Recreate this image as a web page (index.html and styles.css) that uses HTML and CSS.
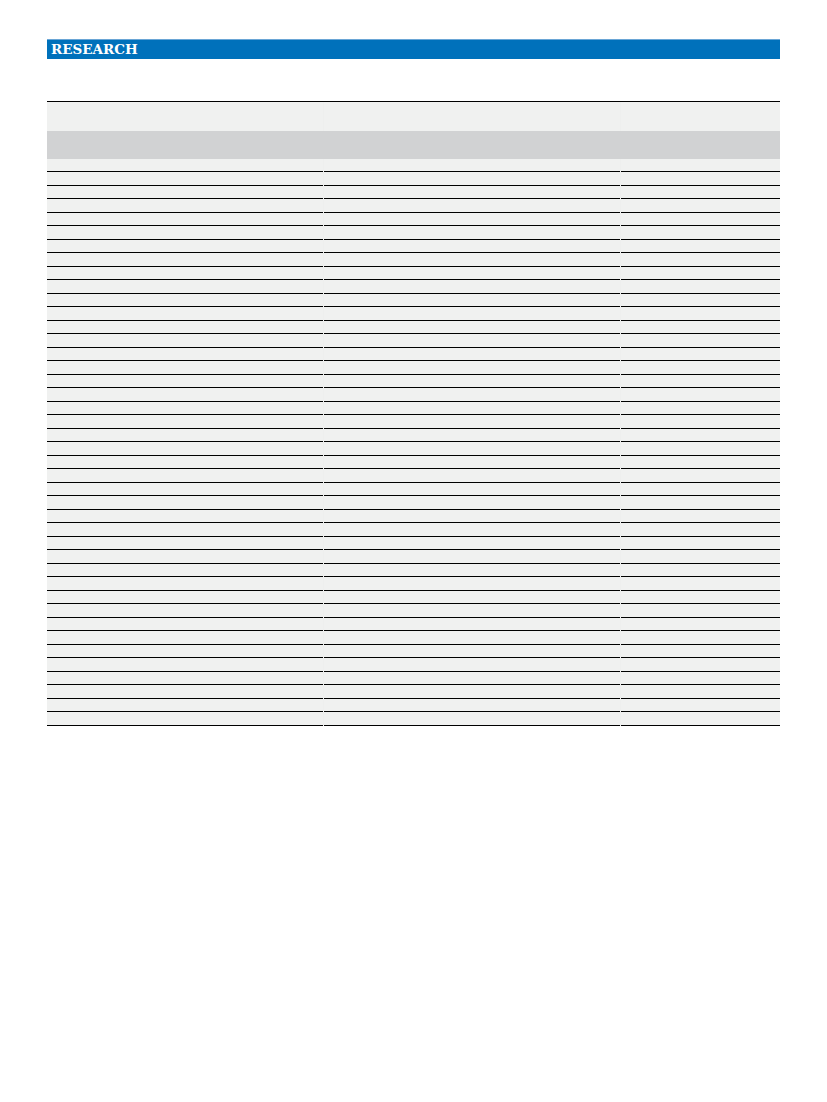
FILE: index.html
```html
<!DOCTYPE html>
<html>
<head>
<meta charset="utf-8">
<link rel="stylesheet" href="styles.css">
</head>
<body>
<div class="page">
  <div class="banner"><span class="banner-title">RESEARCH</span></div>
  <div class="table">
    <div class="row head-a"><div class="cell"></div><div class="cell"></div><div class="cell"></div></div>
    <div class="row head-b"><div class="cell"></div><div class="cell"></div><div class="cell"></div></div>
    <div class="row head-c"><div class="cell"></div><div class="cell"></div><div class="cell"></div></div>
    <div class="row body"><div class="cell"></div><div class="cell"></div><div class="cell"></div></div>
    <div class="row body"><div class="cell"></div><div class="cell"></div><div class="cell"></div></div>
    <div class="row body"><div class="cell"></div><div class="cell"></div><div class="cell"></div></div>
    <div class="row body"><div class="cell"></div><div class="cell"></div><div class="cell"></div></div>
    <div class="row body"><div class="cell"></div><div class="cell"></div><div class="cell"></div></div>
    <div class="row body"><div class="cell"></div><div class="cell"></div><div class="cell"></div></div>
    <div class="row body"><div class="cell"></div><div class="cell"></div><div class="cell"></div></div>
    <div class="row body"><div class="cell"></div><div class="cell"></div><div class="cell"></div></div>
    <div class="row body"><div class="cell"></div><div class="cell"></div><div class="cell"></div></div>
    <div class="row body"><div class="cell"></div><div class="cell"></div><div class="cell"></div></div>
    <div class="row body"><div class="cell"></div><div class="cell"></div><div class="cell"></div></div>
    <div class="row body"><div class="cell"></div><div class="cell"></div><div class="cell"></div></div>
    <div class="row body"><div class="cell"></div><div class="cell"></div><div class="cell"></div></div>
    <div class="row body"><div class="cell"></div><div class="cell"></div><div class="cell"></div></div>
    <div class="row body"><div class="cell"></div><div class="cell"></div><div class="cell"></div></div>
    <div class="row body"><div class="cell"></div><div class="cell"></div><div class="cell"></div></div>
    <div class="row body"><div class="cell"></div><div class="cell"></div><div class="cell"></div></div>
    <div class="row body"><div class="cell"></div><div class="cell"></div><div class="cell"></div></div>
    <div class="row body"><div class="cell"></div><div class="cell"></div><div class="cell"></div></div>
    <div class="row body"><div class="cell"></div><div class="cell"></div><div class="cell"></div></div>
    <div class="row body"><div class="cell"></div><div class="cell"></div><div class="cell"></div></div>
    <div class="row body"><div class="cell"></div><div class="cell"></div><div class="cell"></div></div>
    <div class="row body"><div class="cell"></div><div class="cell"></div><div class="cell"></div></div>
    <div class="row body"><div class="cell"></div><div class="cell"></div><div class="cell"></div></div>
    <div class="row body"><div class="cell"></div><div class="cell"></div><div class="cell"></div></div>
    <div class="row body"><div class="cell"></div><div class="cell"></div><div class="cell"></div></div>
    <div class="row body"><div class="cell"></div><div class="cell"></div><div class="cell"></div></div>
    <div class="row body"><div class="cell"></div><div class="cell"></div><div class="cell"></div></div>
    <div class="row body"><div class="cell"></div><div class="cell"></div><div class="cell"></div></div>
    <div class="row body"><div class="cell"></div><div class="cell"></div><div class="cell"></div></div>
    <div class="row body"><div class="cell"></div><div class="cell"></div><div class="cell"></div></div>
    <div class="row body"><div class="cell"></div><div class="cell"></div><div class="cell"></div></div>
    <div class="row body"><div class="cell"></div><div class="cell"></div><div class="cell"></div></div>
    <div class="row body"><div class="cell"></div><div class="cell"></div><div class="cell"></div></div>
    <div class="row body"><div class="cell"></div><div class="cell"></div><div class="cell"></div></div>
    <div class="row body"><div class="cell"></div><div class="cell"></div><div class="cell"></div></div>
    <div class="row body"><div class="cell"></div><div class="cell"></div><div class="cell"></div></div>
    <div class="row body"><div class="cell"></div><div class="cell"></div><div class="cell"></div></div>
    <div class="row body"><div class="cell"></div><div class="cell"></div><div class="cell"></div></div>
    <div class="row body"><div class="cell"></div><div class="cell"></div><div class="cell"></div></div>
    <div class="row body"><div class="cell"></div><div class="cell"></div><div class="cell"></div></div>
  </div>
</div>
</body>
</html>
```

FILE: styles.css
```css
html, body {
  margin: 0;
  padding: 0;
  background: #ffffff;
}

.page {
  width: 733px;
  padding: 39px 0 0 47px;
  font-family: "DejaVu Serif", "Liberation Serif", serif;
}

.banner {
  height: 19px;
  background: #0071bb;
  border-top: 1px solid #6aa6d6;
  display: flex;
  align-items: center;
  padding-left: 4px;
}

.banner-title {
  color: #ffffff;
  font-family: "DejaVu Serif", serif;
  font-weight: bold;
  font-size: 13.5px;
  line-height: 1;
  padding-top: 1px;
}

.table {
  margin-top: 42px;
  border-top: 1px solid #000000;
}

.row {
  display: grid;
  grid-template-columns: 276px 296px 159px;
  column-gap: 1px;
  background: #eeefee;
}

.cell {
  background: #f0f1f0;
  box-sizing: border-box;
}

.head-a .cell {
  height: 29px;
}

.head-b {
  background: #d1d2d3;
}

.head-b .cell {
  height: 28px;
  background: #d1d2d3;
}

.head-c .cell {
  height: 13px;
  border-bottom: 1px solid #000000;
}

.body .cell {
  height: 13.5px;
  border-bottom: 1px solid #000000;
}
```
